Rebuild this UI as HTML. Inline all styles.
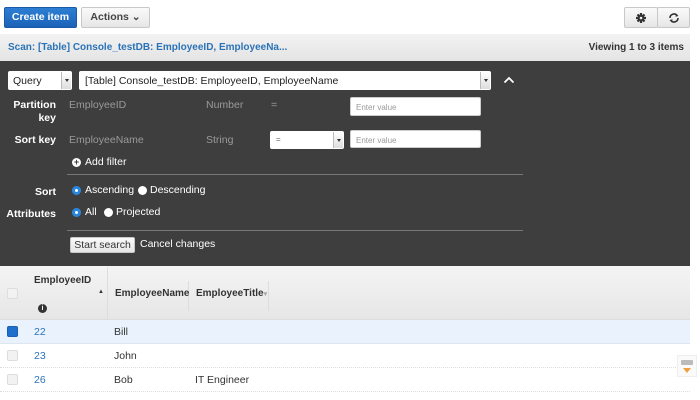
<!DOCTYPE html>
<html><head><style>
*{box-sizing:border-box;margin:0;padding:0}
body{width:700px;height:400px;background:#fff;font-family:"Liberation Sans",sans-serif;font-size:10.5px;color:#333;position:relative;overflow:hidden}
.a{position:absolute;white-space:nowrap}
.b{font-weight:bold}
.btn{position:absolute;border:1px solid #c8c8c8;border-radius:2px;background:linear-gradient(#fafafa,#e6e6e6);font-weight:bold;color:#444;font-size:10.5px;text-align:center}
.lbl{position:absolute;color:#fff;font-weight:bold;text-align:right;width:56px;left:0}
.g{color:#9a9a9a}
.inp{position:absolute;background:#fff;border:1px solid #ccc;border-radius:2px;font-size:8px;color:#999;padding:5px 0 0 5px}
.sel{position:absolute;background:#fff;border-radius:2px;color:#222;font-size:10.5px}
.arr{position:absolute;right:1px;top:1px;bottom:1px;width:10px;background:linear-gradient(#fff,#ddd);border-left:1px solid #bbb}
.arr:after{content:"";position:absolute;left:3px;top:7px;border:2px solid transparent;border-top:3px solid #333}
.rad{position:absolute;width:9px;height:9px;border-radius:50%;background:#fff}
.rad.on{background:#1e7bd4;box-shadow:inset 0 0 0 3px #2a86dc}
.rad.on:after{content:"";position:absolute;left:3px;top:3px;width:3px;height:3px;border-radius:50%;background:#fff}
.w{color:#fff}
.cb{position:absolute;left:7px;width:11px;height:11px;border:1px solid #ddd;border-radius:2px;background:#f2f2f2}
.row{position:absolute;left:0;width:690px;height:24px;border-bottom:1px dotted #ddd}
.lk{color:#2b73b8}
</style></head><body>
<div class="btn" style="left:4px;top:7px;width:73px;height:21px;background:linear-gradient(#2d7fd3,#1b62b8);border-color:#1a5aa6;color:#fff;line-height:19px">Create item</div>
<div class="btn" style="left:81px;top:7px;width:69px;height:21px;line-height:19px">Actions &#8964;</div>
<div class="btn" style="left:624px;top:7px;width:34px;height:21px"><svg width="12" height="12" viewBox="0 0 12 12" style="margin-top:4px"><circle cx="6" cy="6" r="3.5" fill="#333"/><g stroke="#333" stroke-width="2.2"><path d="M6 1v10M1 6h10M2.5 2.5l7 7M9.5 2.5l-7 7"/></g><circle cx="6" cy="6" r="1.3" fill="#eee"/></svg></div>
<div class="btn" style="left:657px;top:7px;width:33px;height:21px"><svg width="12" height="12" viewBox="0 0 12 12" style="margin-top:4px"><path d="M2 6a4 4 0 0 1 7-2.6" fill="none" stroke="#333" stroke-width="1.6"/><path d="M10 6a4 4 0 0 1-7 2.6" fill="none" stroke="#333" stroke-width="1.6"/><path d="M8 1.5l2.5 2.5-3 .8z M4 10.5L1.5 8l3-.8z" fill="#333"/></svg></div>
<div class="a" style="left:0;top:34px;width:690px;height:27px;background:linear-gradient(#f2f2f2,#e4e4e4)"></div>
<div class="a b lk" style="left:8px;top:42px;font-size:10px">Scan: [Table] Console_testDB: EmployeeID, EmployeeNa...</div>
<div class="a b" style="right:16px;top:42px;font-size:10px;color:#333">Viewing 1 to 3 items</div>
<div class="a" style="left:0;top:61px;width:690px;height:205px;background:#3e3e3e"></div>
<div class="sel" style="left:8px;top:71px;width:64px;height:19px;padding:4px 0 0 5px">Query<div class="arr"></div></div>
<div class="sel" style="left:79px;top:71px;width:412px;height:19px;padding:4px 0 0 6px">[Table] Console_testDB: EmployeeID, EmployeeName<div class="arr"></div></div>
<svg class="a" style="left:503px;top:76px" width="12" height="8"><path d="M1.5 6.5L6 2l4.5 4.5" fill="none" stroke="#fff" stroke-width="1.8"/></svg>
<div class="lbl" style="top:99px;line-height:13px">Partition<br>key</div>
<div class="a g" style="left:69px;top:99px">EmployeeID</div>
<div class="a g" style="left:206px;top:99px">Number</div>
<div class="a g" style="left:271px;top:99px">=</div>
<div class="inp" style="left:350px;top:97px;width:131px;height:19px">Enter value</div>
<div class="lbl" style="top:134px">Sort key</div>
<div class="a g" style="left:69px;top:134px">EmployeeName</div>
<div class="a g" style="left:206px;top:134px">String</div>
<div class="sel" style="left:270px;top:131px;width:74px;height:18px;padding:4px 0 0 6px;font-size:8px;color:#666">=<div class="arr"></div></div>
<div class="inp" style="left:350px;top:130px;width:131px;height:18px">Enter value</div>
<div class="a" style="left:72px;top:158px;width:9px;height:9px;border-radius:50%;background:#fff;color:#3e3e3e;font-size:9px;font-weight:bold;line-height:9px;text-align:center">+</div>
<div class="a w" style="left:85px;top:156px">Add filter</div>
<div class="a" style="left:67px;top:174px;width:456px;height:1px;background:#777"></div>
<div class="lbl" style="top:186px">Sort</div>
<div class="rad on" style="left:72px;top:186px"></div><div class="a w" style="left:85px;top:184px">Ascending</div>
<div class="rad" style="left:138px;top:186px"></div><div class="a w" style="left:150px;top:184px">Descending</div>
<div class="lbl" style="top:208px">Attributes</div>
<div class="rad on" style="left:72px;top:208px"></div><div class="a w" style="left:85px;top:206px">All</div>
<div class="rad" style="left:104px;top:208px"></div><div class="a w" style="left:116px;top:206px">Projected</div>
<div class="a" style="left:67px;top:230px;width:456px;height:1px;background:#777"></div>
<div class="btn" style="left:70px;top:237px;width:65px;height:16px;font-weight:normal;color:#333;line-height:14px">Start search</div>
<div class="a w" style="left:140px;top:238px">Cancel changes</div>
<div class="a" style="left:0;top:266px;width:690px;height:54px;background:linear-gradient(#f4f4f4,#e6e6e6);border-bottom:1px solid #ddd"></div>
<div class="cb" style="top:288px"></div>
<div class="a" style="left:107px;top:267px;width:1px;height:53px;background:#ddd"></div>
<div class="a" style="left:188px;top:281px;width:1px;height:30px;background:#ddd"></div>
<div class="a" style="left:268px;top:281px;width:1px;height:30px;background:#ddd"></div>
<div class="a b" style="left:34px;top:275px;font-size:10px">EmployeeID</div>
<div class="a" style="left:98px;top:289px;font-size:6px">&#9650;</div>
<div class="a" style="left:38px;top:304px;width:9px;height:9px;border-radius:50%;background:#333;color:#fff;font-size:7px;font-weight:bold;text-align:center;line-height:9px">i</div>
<div class="a b" style="left:115px;top:288px;font-size:10px">EmployeeName</div>
<div class="a b" style="left:196px;top:288px;font-size:10px">EmployeeTitle<span style="color:#aaa;font-size:7px">&#9662;</span></div>
<div class="row" style="top:320px;background:#eaf3fd;border-bottom:1px solid #dde6ee"></div>
<div class="cb" style="top:326px;background:#1f6fcc;border-color:#1a5fb0"></div>
<div class="a lk" style="left:34px;top:326px">22</div><div class="a" style="left:114px;top:326px">Bill</div>
<div class="row" style="top:344px"></div>
<div class="cb" style="top:350px"></div>
<div class="a lk" style="left:34px;top:350px">23</div><div class="a" style="left:114px;top:350px">John</div>
<div class="row" style="top:368px"></div>
<div class="cb" style="top:374px"></div>
<div class="a lk" style="left:34px;top:374px">26</div><div class="a" style="left:114px;top:374px">Bob</div><div class="a" style="left:195px;top:374px">IT Engineer</div>
<div class="a" style="left:677px;top:355px;width:20px;height:22px;border:1px solid #eee;background:#fafafa"><div style="margin:4px 3px 0;height:5px;background:#bbb;border-radius:1px"></div><div style="margin:3px auto 0;width:0;border:4px solid transparent;border-top:5px solid #f0a040"></div></div>
</body></html>
